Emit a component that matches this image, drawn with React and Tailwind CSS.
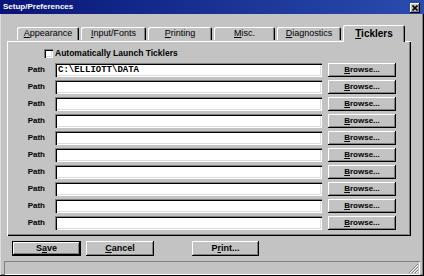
import { useState } from 'react';

const raised = 'bg-[#c3c3c3] shadow-[inset_-1px_-1px_0_#000,inset_1px_1px_0_#fff,inset_-2px_-2px_0_#808080]';
const sunken = 'bg-white shadow-[inset_1px_1px_0_#808080,inset_2px_2px_0_#000,inset_-1px_-1px_0_#fff,inset_-2px_-2px_0_#dcdcdc]';

const tabs = [
  { label: 'Appearance', key: 'A', rest: 'ppearance', w: 'w-[62px]' },
  { label: 'Input/Fonts', key: 'I', rest: 'nput/Fonts', w: 'w-[65px]' },
  { label: 'Printing', key: 'P', rest: 'rinting', w: 'w-[64px]' },
  { label: 'Misc.', key: 'M', rest: 'isc.', w: 'w-[61px]' },
  { label: 'Diagnostics', key: 'D', rest: 'iagnostics', w: 'w-[64px]' },
];

function Button({ children, className = '', text = 'text-[9px]' }) {
  return (
    <button className={`${raised} ${className} flex items-center justify-center font-bold ${text} text-black leading-none`}>
      {children}
    </button>
  );
}

export default function App() {
  const [paths] = useState(['C:\\ELLIOTT\\DATA', '', '', '', '', '', '', '', '', '']);

  return (
    <div
      className="w-[424px] h-[276px] bg-[#c3c3c3] flex flex-col shadow-[inset_-1px_-1px_0_#000,inset_1px_1px_0_#dcdcdc,inset_-2px_-2px_0_#808080] overflow-hidden"
      style={{ fontFamily: '"Liberation Sans", Arial, sans-serif' }}
    >
      {/* title bar */}
      <div className="h-[14px] flex items-center justify-between pl-[3px] pr-[4px] bg-gradient-to-r from-[#0a1478] to-[#2a4cae]">
        <span className="text-white font-bold text-[8px] leading-none">Setup/Preferences</span>
        <div className={`${raised} w-[10px] h-[10px] flex items-center justify-center mt-[2px]`}>
          <svg width="6" height="6" viewBox="0 0 6 6">
            <path d="M0.5 0.5 L5.5 5.5 M5.5 0.5 L0.5 5.5" stroke="#000" strokeWidth="1.6" />
          </svg>
        </div>
      </div>

      {/* tabs */}
      <div className="mt-[11px] pl-[17px] flex items-end gap-[2px] h-[16px] relative z-10">
        {tabs.map(t => (
          <div
            key={t.label}
            className={`${t.w} h-[13px] mb-[1px] rounded-t-[2px] bg-[#c3c3c3] shadow-[inset_1px_1px_0_#fff,inset_-1px_0_0_#000,inset_-2px_0_0_#808080] flex items-center justify-center text-[9px] text-black leading-none`}
          >
            <span><span className="underline">{t.key}</span>{t.rest}</span>
          </div>
        ))}
        <div className="w-[62px] h-[17px] rounded-t-[2px] bg-[#c3c3c3] shadow-[inset_1px_1px_0_#fff,inset_-1px_0_0_#000,inset_-2px_0_0_#808080] flex items-center justify-center text-[10px] font-bold text-black leading-none -mb-[1px]">
          <span><span className="underline">T</span>icklers</span>
        </div>
      </div>

      {/* panel */}
      <div className="ml-[7px] w-[404px] h-[195px] shadow-[inset_1px_1px_0_#fff,inset_-1px_-1px_0_#000,inset_-2px_-2px_0_#808080] flex flex-col">
        <div className="pl-[37px] pt-[7px] flex items-center gap-[2px] h-[17px]">
          <div className={`${sunken} w-[9px] h-[9px]`} />
          <span className="font-bold text-[8.5px] text-black leading-none">Automatically Launch Ticklers</span>
        </div>
        <div className="mt-[5px] flex flex-col gap-[3px]">
          {paths.map((p, i) => (
            <div key={i} className="flex items-center h-[14px]">
              <span className="w-[38px] text-right font-bold text-[8px] text-black leading-none">Path</span>
              <div className={`${sunken} ml-[10px] w-[267px] h-[14px] flex items-center pl-[3px]`}>
                <span className="font-bold text-[9px] text-black leading-none" style={{ fontFamily: '"Liberation Mono", monospace' }}>{p}</span>
              </div>
              <Button className="ml-[6px] w-[68px] h-[14px]" text="text-[8px]">
                <span><span className="underline">B</span>rowse...</span>
              </Button>
            </div>
          ))}
        </div>
      </div>

      {/* bottom buttons */}
      <div className="mt-[5px] pl-[12px] flex items-center h-[15px]">
        <div className="w-[69px] h-[15px] border border-black flex">
          <Button className="w-full h-full">
            <span>S<span className="underline">a</span>ve</span>
          </Button>
        </div>
        <Button className="ml-[5px] w-[68px] h-[15px]">
          <span><span className="underline">C</span>ancel</span>
        </Button>
        <Button className="ml-[38px] w-[67px] h-[15px]">
          <span>P<span className="underline">r</span>int...</span>
        </Button>
      </div>

      {/* status bar */}
      <div className="mt-[5px] mx-[4px] h-[14px] flex items-end justify-end shadow-[inset_1px_1px_0_#808080,inset_-1px_-1px_0_#fff]">
        <svg width="12" height="12" viewBox="0 0 12 12" className="mb-[1px] mr-[1px]">
          <path d="M11 2 L2 11 M11 5 L5 11 M11 8 L8 11" stroke="#808080" strokeWidth="1" />
          <path d="M11 3 L3 11 M11 6 L6 11 M11 9 L9 11" stroke="#fff" strokeWidth="1" />
        </svg>
      </div>
    </div>
  );
}
